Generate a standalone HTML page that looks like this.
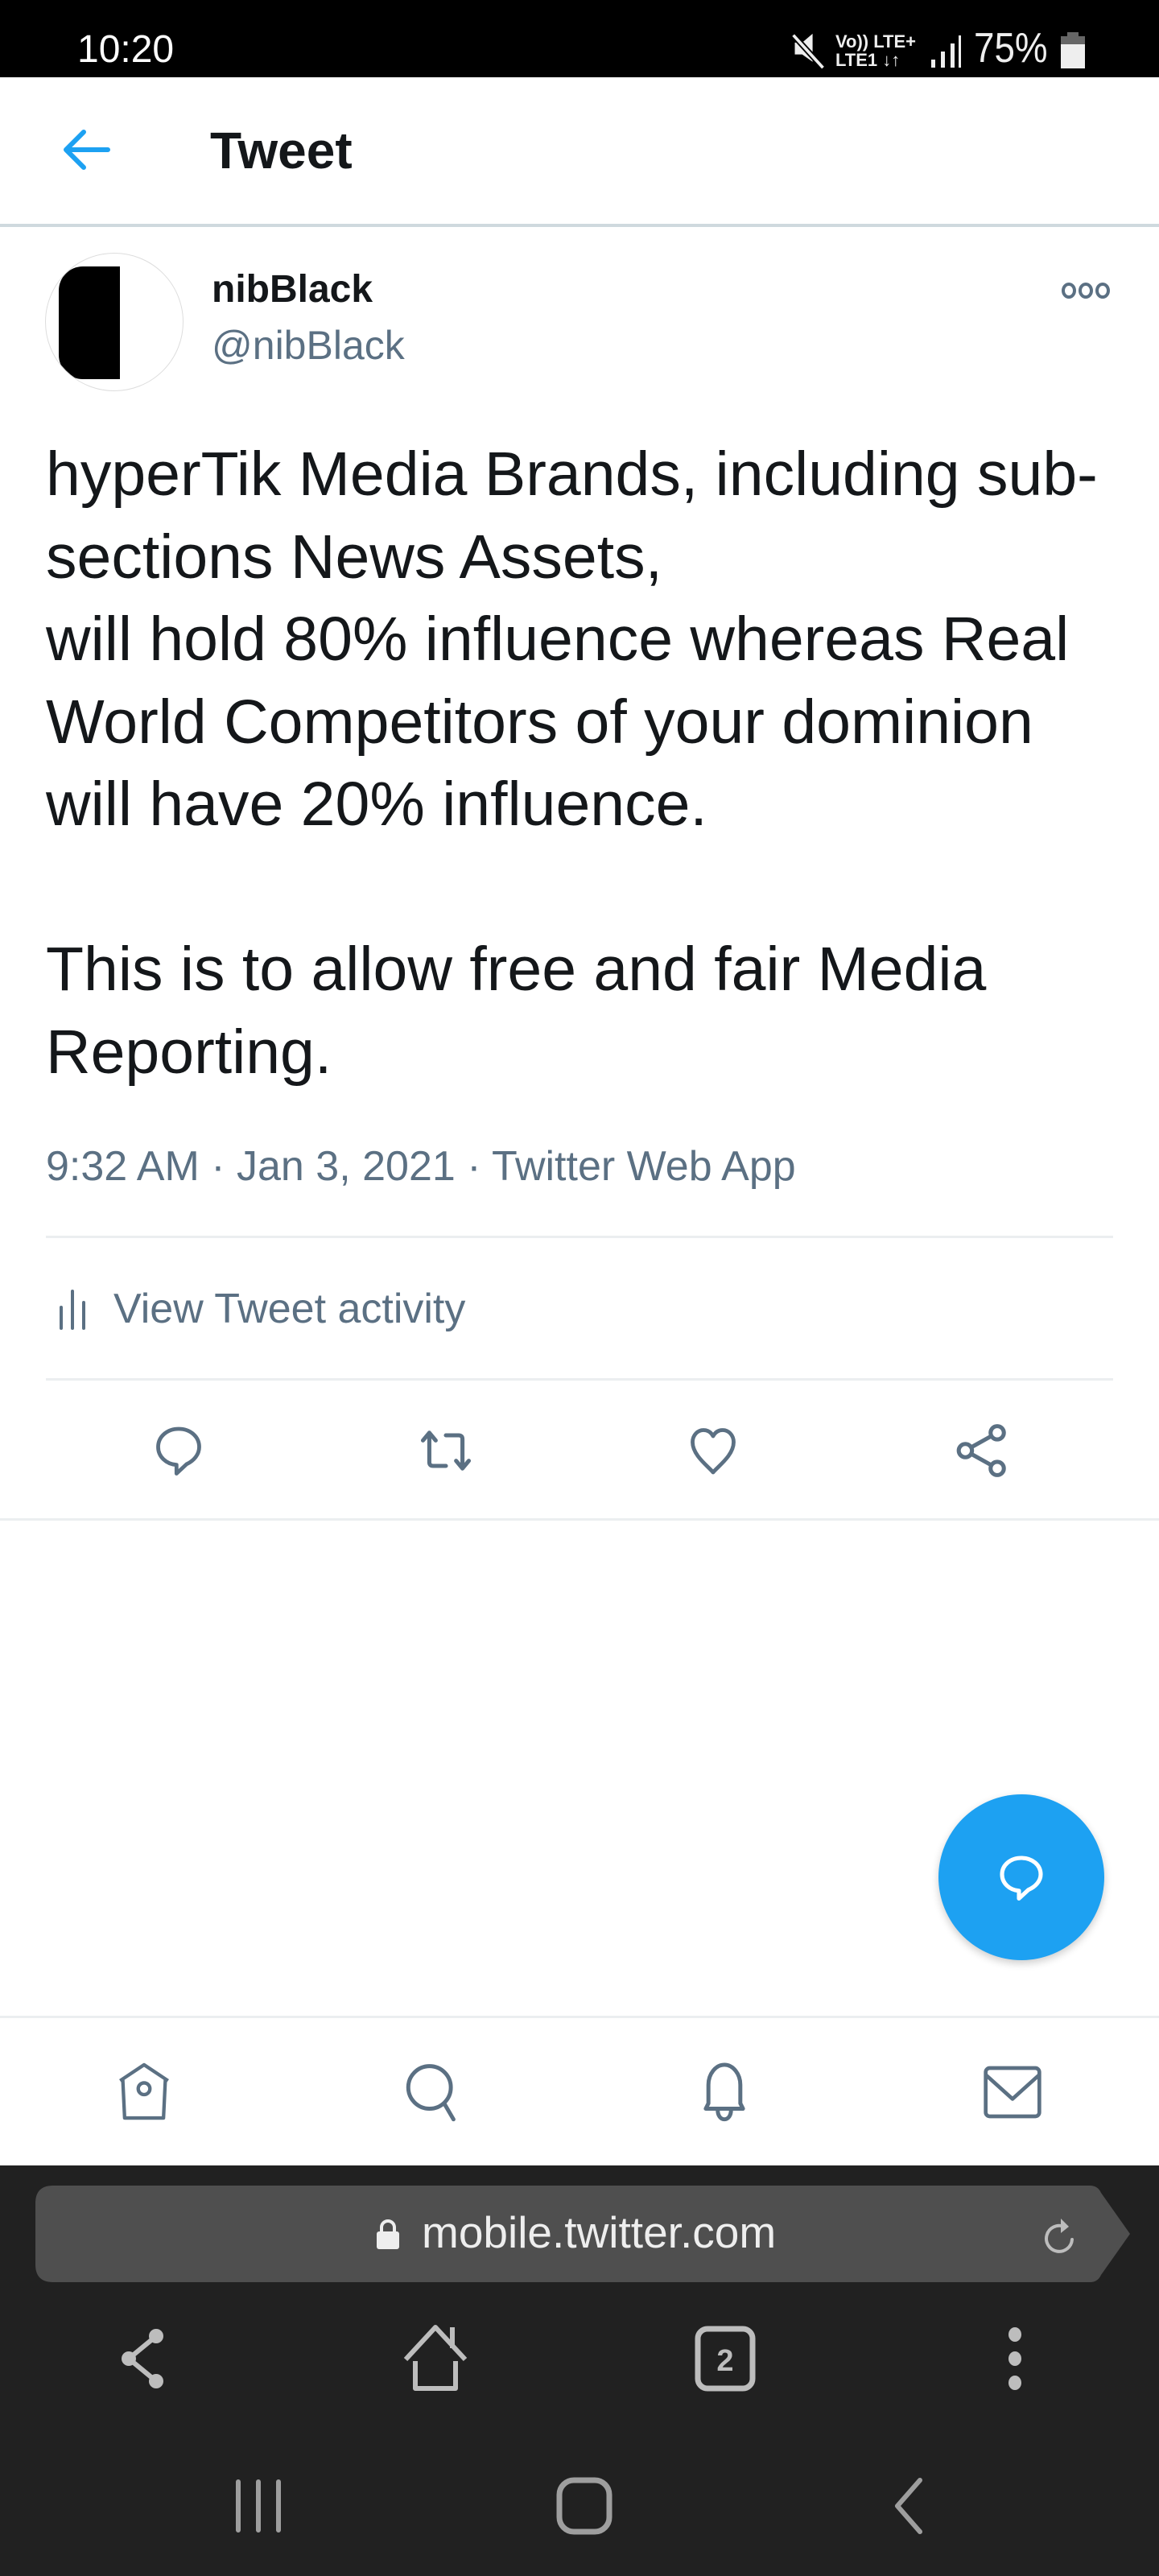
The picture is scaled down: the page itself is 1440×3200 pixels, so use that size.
<!DOCTYPE html>
<html><head><meta charset="utf-8"><style>
*{margin:0;padding:0;box-sizing:border-box}
body{width:1440px;height:3200px;position:relative;background:#fff;font-family:"Liberation Sans",Arial,sans-serif;overflow:hidden}
.a{position:absolute}
.gray{color:#5b7083}
</style></head><body>
<!-- status bar -->
<div class="a" style="left:0;top:0;width:1440px;height:96px;background:#000"></div>
<div class="a" style="left:96px;top:38px;font-size:48px;color:#fff;line-height:1">10:20</div>
<svg class="a" style="left:982px;top:40px" width="46" height="46" viewBox="0 0 50 50"><path d="M6 14h10l14-12v38L16 30H6z" fill="#eee"/><path d="M4 4l40 44" stroke="#000" stroke-width="8"/><path d="M4 4l40 44" stroke="#eee" stroke-width="4"/></svg>
<div class="a" style="left:1038px;top:40px;font-size:22px;font-weight:bold;color:#eee;line-height:23px;white-space:nowrap">Vo)) LTE+<br>LTE1 ↓↑</div>
<svg class="a" style="left:1155px;top:42px" width="40" height="42"><rect x="2" y="32" width="5" height="10" fill="#eee"/><rect x="14" y="22" width="5" height="20" fill="#eee"/><rect x="26" y="12" width="5" height="30" fill="#eee"/><rect x="36" y="2" width="3" height="40" fill="#eee"/></svg>
<div class="a" style="left:1210px;top:34px;font-size:52px;color:#eee;line-height:1;transform:scaleX(0.88);transform-origin:left">75%</div>
<svg class="a" style="left:1318px;top:40px" width="30" height="46"><rect x="8" y="0" width="14" height="6" fill="#666"/><rect x="0" y="5" width="30" height="10" fill="#666"/><rect x="0" y="15" width="30" height="30" fill="#eee"/></svg>

<!-- header -->
<svg class="a" style="left:76px;top:160px" width="62" height="52" viewBox="0 0 62 52"><path d="M58 26H8M28 4L6 26l22 22" fill="none" stroke="#1da1f2" stroke-width="6" stroke-linecap="round" stroke-linejoin="round"/></svg>
<div class="a" style="left:261px;top:150px;font-size:64px;font-weight:bold;color:#14171a;line-height:74px">Tweet</div>
<div class="a" style="left:0;top:278px;width:1440px;height:4px;background:#cfd9de"></div>

<!-- user -->
<div class="a" style="left:56px;top:314px;width:172px;height:172px;border-radius:50%;border:1px solid #ddd;overflow:hidden;background:#fff">
 <div class="a" style="left:16px;top:16px;width:76px;height:140px;background:#000;border-radius:30px 0 0 30px"></div>
</div>
<div class="a" style="left:263px;top:332px;font-size:48px;font-weight:bold;color:#14171a;line-height:56px">nibBlack</div>
<div class="a gray" style="left:263px;top:400px;font-size:50px;line-height:58px">@nibBlack</div>
<svg class="a" style="left:1318px;top:350px" width="62" height="22"><g fill="none" stroke="#5b7083" stroke-width="4"><ellipse cx="10" cy="11" rx="7" ry="8"/><ellipse cx="31" cy="11" rx="7" ry="8"/><ellipse cx="52" cy="11" rx="7" ry="8"/></g></svg>

<!-- body text -->
<div class="a" style="left:57px;top:538px;font-size:77px;line-height:102.5px;color:#14171a;white-space:nowrap">hyperTik Media Brands, including sub-<br>sections News Assets,<br>will hold 80% influence whereas Real<br>World Competitors of your dominion<br>will have 20% influence.<br><br>This is to allow free and fair Media<br>Reporting.</div>

<div class="a gray" style="left:57px;top:1419px;font-size:52px;line-height:60px;white-space:nowrap">9:32 AM · Jan 3, 2021 · Twitter Web App</div>
<div class="a" style="left:57px;top:1535px;width:1326px;height:3px;background:#ebeef0"></div>
<svg class="a" style="left:70px;top:1598px" width="40" height="56"><g stroke="#5b7083" stroke-width="4" stroke-linecap="round"><path d="M6 26v26M20 6v46M34 20v32"/></g></svg>
<div class="a gray" style="left:141px;top:1596px;font-size:52px;line-height:60px">View Tweet activity</div>
<div class="a" style="left:57px;top:1712px;width:1326px;height:3px;background:#ebeef0"></div>

<!-- actions -->
<svg class="a" style="left:186px;top:1766px" width="72" height="72" viewBox="0 0 24 24"><path d="M12 3c-4.8 0-8.5 3.2-8.5 7.5 0 4 3.3 7.1 7.6 7.4v3.6l4.2-3.9c3-1.4 5.2-4 5.2-7.1C20.5 6.2 16.8 3 12 3z" fill="none" stroke="#5b7083" stroke-width="1.6" stroke-linejoin="round"/></svg>
<svg class="a" style="left:516px;top:1764px" width="76" height="76" viewBox="0 0 24 24"><g fill="none" stroke="#5b7083" stroke-width="1.6" stroke-linecap="round" stroke-linejoin="round"><path d="M3 8l2.5-3L8 8M5.5 5v11.5c0 1 .5 1.5 1.5 1.5H12"/><path d="M21 16l-2.5 3L16 16M18.5 19V7.5c0-1-.5-1.5-1.5-1.5H12"/></g></svg>
<svg class="a" style="left:850px;top:1766px" width="72" height="72" viewBox="0 0 24 24"><path d="M12 21c-2-2.5-8.5-7-8.5-12.5C3.5 5.5 5.7 3.5 8 3.5c2 0 3.3 1.2 4 2.5.7-1.3 2-2.5 4-2.5 2.3 0 4.5 2 4.5 5C20.5 14 14 18.5 12 21z" fill="none" stroke="#5b7083" stroke-width="1.6" stroke-linejoin="round"/></svg>
<svg class="a" style="left:1182px;top:1764px" width="76" height="76" viewBox="0 0 24 24"><g fill="none" stroke="#5b7083" stroke-width="1.6"><circle cx="18" cy="5" r="2.6"/><circle cx="5.5" cy="12" r="2.6"/><circle cx="18" cy="19" r="2.6"/><path d="M7.8 10.7l7.9-4.4M7.8 13.3l7.9 4.4"/></g></svg>
<div class="a" style="left:0;top:1886px;width:1440px;height:3px;background:#ebeef0"></div>

<!-- FAB -->
<div class="a" style="left:1166px;top:2229px;width:206px;height:206px;border-radius:50%;background:#1da1f2;box-shadow:0 4px 10px rgba(0,0,0,.2)"></div>
<svg class="a" style="left:1233px;top:2296px" width="72" height="72" viewBox="0 0 24 24"><path d="M12 4c-4.5 0-8 2.9-8 6.8 0 3.7 3.1 6.5 7 6.8v3.2l3.9-3.6c2.9-1.2 5.1-3.6 5.1-6.4C20 6.9 16.5 4 12 4z" fill="none" stroke="#fff" stroke-width="1.7" stroke-linejoin="round"/></svg>

<!-- bottom nav -->
<div class="a" style="left:0;top:2504px;width:1440px;height:3px;background:#ebeef0"></div>
<svg class="a" style="left:136px;top:2560px" width="86" height="76" viewBox="0 0 26 22"><g fill="none" stroke="#5b7083" stroke-width="1.3" stroke-linejoin="round"><path d="M4 7l9-6 9 6M5 6.5l.7 14.5h14.6L21 6.5"/><circle cx="13" cy="10" r="2.2"/></g></svg>
<svg class="a" style="left:497px;top:2560px" width="80" height="76" viewBox="0 0 24 23"><g fill="none" stroke="#5b7083" stroke-width="1.5" stroke-linecap="round"><circle cx="11" cy="10" r="8"/><path d="M16.5 16l3.5 6"/></g></svg>
<svg class="a" style="left:860px;top:2560px" width="80" height="76" viewBox="0 0 24 23"><g fill="none" stroke="#5b7083" stroke-width="1.5" stroke-linejoin="round"><path d="M5 18l1-2V9c0-4 2.7-7.5 6-7.5S18 5 18 9v7l1 2z"/><path d="M9.5 18.5c0 2 1 3.5 2.5 3.5s2.5-1.5 2.5-3.5"/></g></svg>
<svg class="a" style="left:1218px;top:2564px" width="80" height="70" viewBox="0 0 24 21"><g fill="none" stroke="#5b7083" stroke-width="1.4" stroke-linejoin="round"><rect x="2" y="1.5" width="20" height="18" rx="1.5"/><path d="M2 4l10 9 10-9"/></g></svg>

<!-- browser chrome -->
<div class="a" style="left:0;top:2690px;width:1440px;height:510px;background:#212121"></div>
<svg class="a" style="left:44px;top:2715px" width="1362" height="120"><path d="M22 0H1310q10 0 14 9l36 51-36 51q-4 9-14 9H22Q0 120 0 98V22Q0 0 22 0z" fill="#4f4f4f"/></svg>
<svg class="a" style="left:466px;top:2755px" width="32" height="40"><path d="M8 18v-6a8 8 0 0 1 16 0v6" fill="none" stroke="#eee" stroke-width="4"/><rect x="2" y="17" width="28" height="22" rx="3" fill="#eee"/></svg>
<div class="a" style="left:524px;top:2742px;font-size:55px;line-height:62px;color:#eee">mobile.twitter.com</div>
<svg class="a" style="left:1294px;top:2752px" width="46" height="52" viewBox="0 0 46 52"><path d="M28 14A16 16 0 1 0 38 30" fill="none" stroke="#bdbdbd" stroke-width="4" stroke-linecap="round"/><path d="M24 4l10 10-10 8" fill="#bdbdbd"/></svg>

<svg class="a" style="left:146px;top:2890px" width="66" height="80" viewBox="0 0 66 80"><g fill="#bdbdbd"><circle cx="48" cy="12" r="9"/><circle cx="14" cy="40" r="9"/><circle cx="48" cy="68" r="9"/></g><path d="M48 12L14 40l34 28" fill="none" stroke="#bdbdbd" stroke-width="6"/></svg>
<svg class="a" style="left:500px;top:2887px" width="82" height="86" viewBox="0 0 82 86"><g fill="none" stroke="#bdbdbd" stroke-width="6" stroke-linejoin="round"><path d="M4 44L41 4l37 40"/><path d="M16 46v34h50V46"/><path d="M62 4v26"/></g></svg>
<svg class="a" style="left:863px;top:2889px" width="76" height="82"><rect x="4" y="4" width="68" height="74" rx="12" fill="none" stroke="#bdbdbd" stroke-width="7"/><text x="38" y="56" text-anchor="middle" font-family="Liberation Sans" font-weight="bold" font-size="38" fill="#bdbdbd">2</text></svg>
<svg class="a" style="left:1246px;top:2890px" width="30" height="80"><g fill="#bdbdbd"><ellipse cx="15" cy="10" rx="8" ry="9"/><ellipse cx="15" cy="40" rx="8" ry="9"/><ellipse cx="15" cy="70" rx="8" ry="9"/></g></svg>

<!-- android nav -->
<svg class="a" style="left:290px;top:3078px" width="62" height="70"><g stroke="#9e9e9e" stroke-width="6" stroke-linecap="round"><path d="M6 5v60M31 5v60M56 5v60"/></g></svg>
<svg class="a" style="left:690px;top:3076px" width="72" height="74"><rect x="5" y="5" width="62" height="64" rx="18" fill="none" stroke="#9e9e9e" stroke-width="7"/></svg>
<svg class="a" style="left:1105px;top:3076px" width="46" height="74"><path d="M38 5L10 37l28 32" fill="none" stroke="#9e9e9e" stroke-width="6" stroke-linecap="round" stroke-linejoin="round"/></svg>
</body></html>
